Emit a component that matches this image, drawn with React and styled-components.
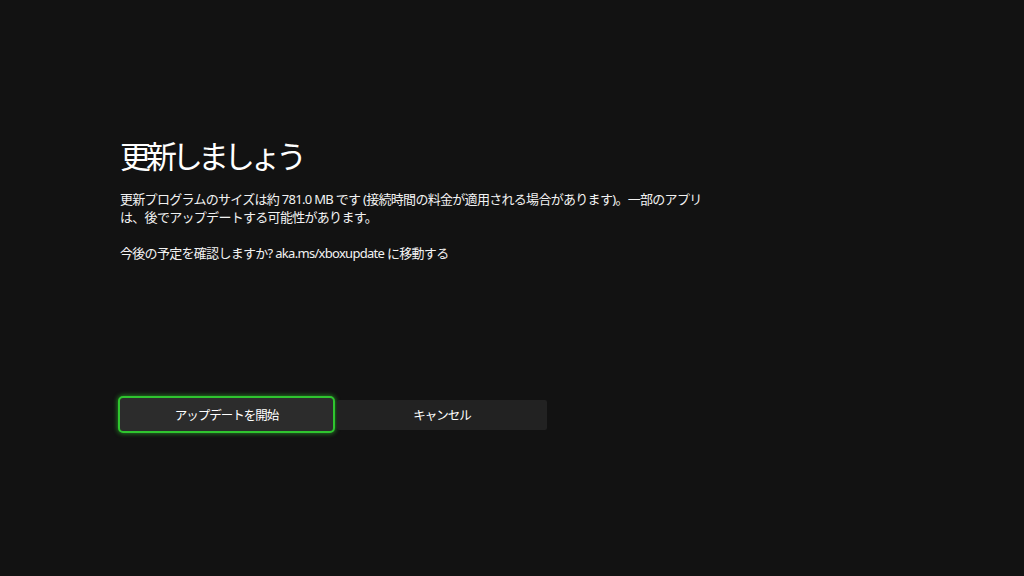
import React from "react";
import styled, { createGlobalStyle } from "styled-components";

const GlobalStyle = createGlobalStyle`
  html, body {
    margin: 0;
    padding: 0;
    background: #121212;
  }
  body {
    font-family: "Noto Sans", "Noto Sans CJK JP", sans-serif;
    color: #ffffff;
  }
`;

const Screen = styled.div`
  width: 1024px;
  height: 576px;
  background: #121212;
  box-sizing: border-box;
  padding: 132px 0 0 120px;
  display: flex;
  flex-direction: column;
`;

const Title = styled.h1`
  margin: 0;
  font-weight: 400;
  font-size: 31px;
  line-height: 48px;
  letter-spacing: -5px;
  color: #ffffff;
`;

const Body = styled.p`
  margin: ${(p) => p.$top || 0}px 0 0 0;
  width: 585px;
  font-size: 13px;
  line-height: 18px;
  letter-spacing: -0.7px;
  color: #f2f2f2;
`;

const Actions = styled.div`
  margin-top: 134px;
  margin-left: -2px;
  display: flex;
  align-items: center;
`;

const Button = styled.button`
  box-sizing: border-box;
  font-family: "Noto Sans", "Noto Sans CJK JP", sans-serif;
  font-size: 12.5px;
  letter-spacing: -1px;
  color: #ffffff;
  border: none;
  cursor: pointer;
  display: flex;
  align-items: center;
  justify-content: center;
  width: ${(p) => p.$width}px;
  height: ${(p) => (p.$focused ? 37 : 30)}px;
  border-radius: ${(p) => (p.$focused ? 5 : 2)}px;
  ${(p) =>
    p.$focused
      ? `
    border: 2.5px solid #2fc52f;
    box-shadow: 0 0 4px 1px rgba(47, 197, 47, 0.55);
    background: #2c2c2c;
  `
      : `background: #222222; margin-left: 2px;`}
`;

export default function App() {
  return (
    <>
      <GlobalStyle />
      <Screen>
        <Title>更新しましょう</Title>
        <Body $top={10}>
          更新プログラムのサイズは約 781.0 MB です (接続時間の料金が適用される場合があります)。一部のアプリは、後でアップデートする可能性があります。
        </Body>
        <Body $top={18}>
          今後の予定を確認しますか? aka.ms/xboxupdate に移動する
        </Body>
        <Actions>
          <Button $focused $width={217}>アップデートを開始</Button>
          <Button $width={210}>キャンセル</Button>
        </Actions>
      </Screen>
    </>
  );
}
